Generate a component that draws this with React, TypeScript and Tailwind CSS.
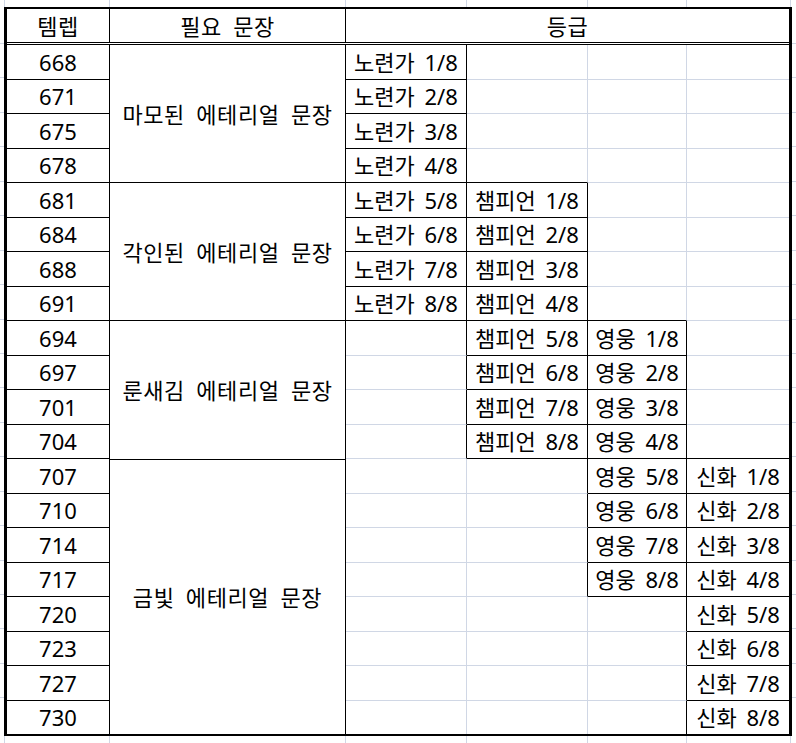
import { FC } from 'react';

const levels = [668, 671, 675, 678, 681, 684, 688, 691, 694, 697, 701, 704, 707, 710, 714, 717, 720, 723, 727, 730];

const groups = [
  { name: '마모된 에테리얼 문장', span: 4 },
  { name: '각인된 에테리얼 문장', span: 4 },
  { name: '룬새김 에테리얼 문장', span: 4 },
  { name: '금빛 에테리얼 문장', span: 8 },
];

const grades = [
  { name: '노련가', width: 'w-[121px]' },
  { name: '챔피언', width: 'w-[121px]' },
  { name: '영웅', width: 'w-[99px]' },
  { name: '신화', width: 'flex-1' },
];

// each grade covers 8 rows, starting 4 rows after the previous one
const filled = (row: number, g: number) => g < grades.length && row >= g * 4 && row < g * 4 + 8;

const font = "font-['Noto_Sans','Noto_Sans_CJK_KR',sans-serif]";

// light sheet gridlines around the table
const TopStrip: FC<{ grow?: boolean }> = ({ grow }) => (
  <div className={`flex ${grow ? 'flex-1' : 'h-[7px]'}`}>
    {[5, 105, 236, 121, 121, 99, 104].map((w, i) => (
      <div key={i} className="border-r border-r-[#d0d7e5]" style={{ width: w }} />
    ))}
    <div className="flex-1" />
  </div>
);

const SideStrip: FC<{ className: string }> = ({ className }) => (
  <div className={`flex flex-col ${className}`}>
    <div className="h-[37px] border-b border-b-[#d0d7e5]" />
    {levels.slice(0, 19).map((l) => (
      <div key={l} className="h-[34.45px] border-b border-b-[#d0d7e5]" />
    ))}
    <div className="flex-1" />
  </div>
);

export default function App() {
  return (
    <div className={`w-[796px] h-[743px] bg-white flex flex-col overflow-hidden text-black ${font}`}>
      <TopStrip />
      <div className="flex h-[729px]">
        <SideStrip className="w-[4px]" />
        <div className="w-[788px] h-[729px] border-x-[3px] border-y-2 border-black flex flex-col">
          {/* header */}
          <div className="h-[36px] flex border-b-[3px] border-double border-black text-[22px] leading-none">
            <div className="w-[103px] border-r border-r-black border-solid flex items-center justify-center tracking-[0.6px]">템렙</div>
            <div className="w-[236px] border-r border-r-black border-solid flex items-center justify-center tracking-[0.6px] [word-spacing:5px]">필요 문장</div>
            <div className="flex-1 flex items-center justify-center tracking-[0.6px]">등급</div>
          </div>

          {/* body */}
          <div className="flex-1 flex text-[22px] leading-none [word-spacing:4px]">
            <div className="w-[103px] flex flex-col">
              {levels.map((l, r) => (
                <div
                  key={l}
                  className={`flex-1 flex items-center justify-center border-r border-r-black ${r < 19 ? 'border-b border-b-black' : ''}`}
                >
                  {l}
                </div>
              ))}
            </div>

            <div className="w-[236px] flex flex-col tracking-[0.6px] [word-spacing:5px]">
              {groups.map((g, i) => (
                <div
                  key={g.name}
                  className={`flex items-center justify-center border-r border-r-black ${g.span === 8 ? 'flex-[8]' : 'flex-[4]'} ${i < groups.length - 1 ? 'border-b border-b-black' : ''}`}
                >
                  {g.name}
                </div>
              ))}
            </div>

            {grades.map((grade, g) => (
              <div key={grade.name} className={`${grade.width} flex flex-col`}>
                {levels.map((l, r) => {
                  const on = filled(r, g);
                  const right = g < 3 ? (on || filled(r, g + 1) ? 'border-r border-r-black' : 'border-r border-r-[#d0d7e5]') : '';
                  const bottom = r < 19 ? (on || filled(r + 1, g) ? 'border-b border-b-black' : 'border-b border-b-[#d0d7e5]') : '';
                  return (
                    <div key={l} className={`flex-1 flex items-center justify-center ${right} ${bottom}`}>
                      {on ? `${grade.name} ${r - g * 4 + 1}/8` : ''}
                    </div>
                  );
                })}
              </div>
            ))}
          </div>
        </div>
        <SideStrip className="flex-1" />
      </div>
      <TopStrip grow />
    </div>
  );
}
